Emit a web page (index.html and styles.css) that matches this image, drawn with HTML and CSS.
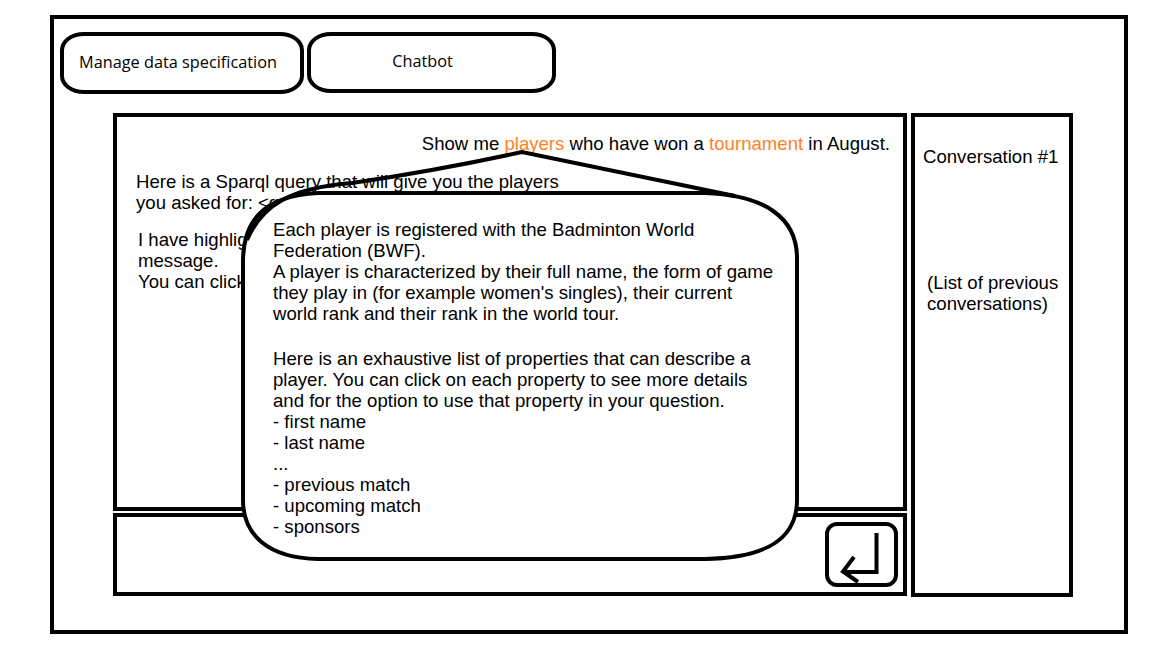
FILE: index.html
```html
<!DOCTYPE html>
<html lang="en">
<head>
<meta charset="utf-8">
<title>Chatbot</title>
<link rel="stylesheet" href="styles.css">
</head>
<body>
<div class="frame">
  <nav class="tabs">
    <div class="tab tab-data">Manage data specification</div>
    <div class="tab tab-chat">Chatbot</div>
  </nav>
  <div class="main">
    <div class="chat-col">
      <div class="chat-log">
        <p class="msg-user">Show me <span class="hl">players</span> who have won a <span class="hl">tournament</span> in August.</p>
        <p class="msg-bot">Here is a Sparql query that will give you the players<br>you asked for: &lt;query&gt;</p>
        <p class="msg-bot msg-bot2">I have highlighted the concepts I found in your<br>message.<br>You can click on them to learn more.</p>
      </div>
      <div class="chat-input">
        <button class="send" type="button" aria-label="Send">
          <svg class="send-icon" viewBox="0 0 65 57" width="65" height="57">
            <path d="M47.5 7 V46 H14" fill="none" stroke="#000" stroke-width="4"/>
            <path d="M25 31 L14 45.5 L29 56" fill="none" stroke="#000" stroke-width="4"/>
          </svg>
        </button>
      </div>
      <div class="popover">
        <svg class="popover-shape" viewBox="236 146 566 418" width="566" height="418">
          <path d="M243 262 C243 222 262 196 318 193 L705 193 C765 195 797 218 797 258 L797 500 C797 540 765 558 705 559 L318 559 C268 558 243 535 243 500 Z" fill="#fff" stroke="#000" stroke-width="4"/>
          <path d="M247 240 C262 205 290 188 352 183 Q440 170 522 152 L735 196" fill="none" stroke="#000" stroke-width="4"/>
        </svg>
        <div class="popover-body">
          <p>Each player is registered with the Badminton World<br>Federation (BWF).<br>A player is characterized by their full name, the form of game<br>they play in (for example women's singles), their current<br>world rank and their rank in the world tour.</p>
          <p class="props">Here is an exhaustive list of properties that can describe a<br>player. You can click on each property to see more details<br>and for the option to use that property in your question.<br>- first name<br>- last name<br>...<br>- previous match<br>- upcoming match<br>- sponsors</p>
        </div>
      </div>
    </div>
    <aside class="sidebar">
      <div class="conv">Conversation #1</div>
      <div class="conv-list">(List of previous<br>conversations)</div>
    </aside>
  </div>
</div>
</body>
</html>
```

FILE: styles.css
```css
* { box-sizing: border-box; }

body {
  margin: 0;
  background: #fff;
  color: #000;
  font-family: "Liberation Sans", Arial, sans-serif;
  font-size: 18.6px;
  line-height: 21px;
}

p { margin: 0; }

.frame {
  margin: 15px 0 0 50px;
  width: 1078px;
  height: 619px;
  border: 4px solid #000;
}

.tabs {
  display: flex;
  gap: 3px;
  padding: 13px 0 0 6px;
  align-items: flex-start;
}

.tab {
  display: flex;
  align-items: center;
  border: 4px solid #000;
  border-radius: 24px / 18px;
  font-family: "Open Sans", "Noto Sans", sans-serif;
  font-size: 16.3px;
}

.tab-data {
  width: 244px;
  height: 62px;
  padding-left: 15px;
  padding-bottom: 1px;
}

.tab-chat {
  width: 249px;
  height: 61px;
  justify-content: center;
  padding-right: 18px;
  padding-bottom: 2px;
}

.main {
  display: flex;
  gap: 4px;
  margin-top: 19px;
  padding-left: 59px;
}

.chat-col {
  position: relative;
  width: 794px;
  display: flex;
  flex-direction: column;
  gap: 2px;
}

.chat-log {
  height: 398px;
  border: 4px solid #000;
  padding: 16px 13px 0 19px;
}

.msg-user {
  text-align: right;
}

.hl { color: #ff7f27; }

.msg-bot { margin-top: 17px; }

.msg-bot2 {
  margin-top: 16px;
  margin-left: 2px;
}

.chat-input {
  height: 83px;
  border: 4px solid #000;
  padding: 5px;
  display: flex;
  justify-content: flex-end;
}

.send {
  width: 73px;
  height: 65px;
  padding: 0;
  border: 4px solid #000;
  border-radius: 12px;
  background: #fff;
  display: block;
}

.send-icon { display: block; }

.popover {
  position: absolute;
  left: 123px;
  top: 33px;
  width: 566px;
  height: 418px;
}

.popover-shape {
  position: absolute;
  left: 0;
  top: 0;
  display: block;
}

.popover-body {
  position: relative;
  padding: 73px 0 0 37px;
}

.props { margin-top: 24px; }

.sidebar {
  width: 162px;
  height: 484px;
  border: 4px solid #000;
  padding: 29px 0 0 8px;
}

.conv-list {
  margin-top: 105px;
  margin-left: 4px;
}
```
